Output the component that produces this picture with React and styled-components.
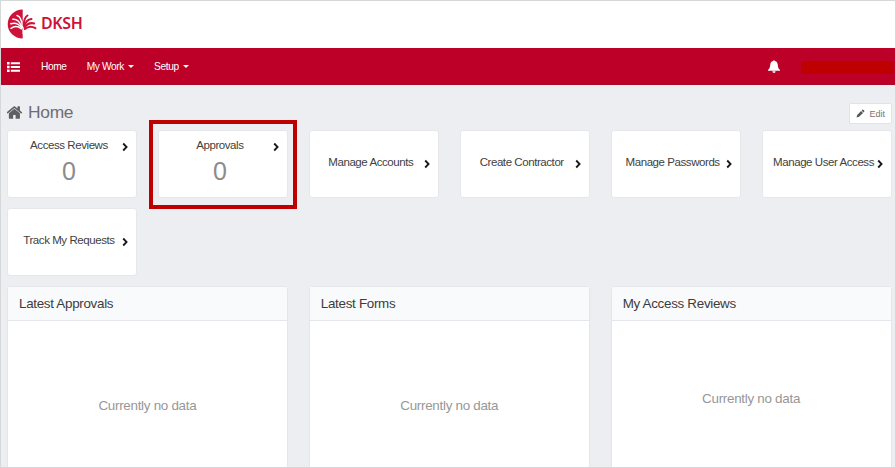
import React from 'react';
import styled, { createGlobalStyle } from 'styled-components';

const GlobalStyle = createGlobalStyle`
  * { box-sizing: border-box; }
  body { margin: 0; background: #edeef2; font-family: "Liberation Sans", Arial, sans-serif; }
`;

const Frame = styled.div`
  display: flex;
  flex-direction: column;
  width: 896px;
  height: 468px;
  overflow: hidden;
  border: 1px solid #d6d7d9;
  background: #edeef2;
`;

const Brand = styled.header`
  display: flex;
  flex: none;
  align-items: center;
  gap: 4px;
  height: 47px;
  padding: 0 0 2px 6px;
  background: #fff;
`;

const LogoMark = styled.svg`
  flex: none;
  width: 30px;
  height: 30px;
`;

const BrandName = styled.span`
  margin-top: -2px;
  font: 600 16px/20px "Noto Sans", "Open Sans", sans-serif;
  letter-spacing: -0.35px;
  color: #ce1238;
`;

const NavBar = styled.nav`
  display: flex;
  flex: none;
  align-items: center;
  height: 37px;
  padding: 0 1px 0 6px;
  background: #bd0027;
  border-bottom: 1px solid #a90a2b;
  color: #fff;
`;

const MenuIcon = styled.svg`
  width: 13px;
  height: 10px;
  margin: 2px 21px 0 0;
`;

const NavItem = styled.a`
  display: flex;
  align-items: center;
  gap: 4px;
  margin: 1px 20px 0 0;
  font-size: 10.2px;
  line-height: 14px;
  letter-spacing: -0.38px;
  white-space: nowrap;
`;

const Caret = styled.span`
  border: 3px solid transparent;
  border-top-color: #fff;
  border-bottom: 0;
`;

const Bell = styled.svg`
  width: 12px;
  height: 13px;
  margin: 0 21px 0 auto;
`;

const UserBlock = styled.div`
  width: 93px;
  height: 13px;
  margin-top: 2px;
  background: #bf0000;
`;

const Content = styled.main`
  flex: 1;
  min-height: 0;
  padding: 0 3.5px 0 6px;
`;

const TitleRow = styled.div`
  display: flex;
  align-items: flex-end;
  justify-content: space-between;
  height: 38px;
`;

const Title = styled.h1`
  display: flex;
  align-items: center;
  gap: 5px;
  margin: 0;
  font-size: 17.4px;
  font-weight: 400;
  line-height: 22px;
  letter-spacing: -0.3px;
  color: #6d6e71;
`;

const HomeIcon = styled.svg`
  width: 16px;
  height: 15px;
  fill: #5f6063;
`;

const EditButton = styled.button`
  display: flex;
  align-items: center;
  gap: 5px;
  width: 43px;
  height: 21px;
  margin-bottom: -1px;
  padding: 0 0 0 6px;
  border: 1px solid #e1e3e8;
  border-radius: 2px;
  background: #fff;
  font: 9px/12px "Liberation Sans", Arial, sans-serif;
  color: #757678;
`;

const PencilIcon = styled.svg`
  width: 9px;
  height: 9px;
`;

const CardGrid = styled.div`
  display: grid;
  grid-template-columns: repeat(6, 1fr);
  grid-auto-rows: 68px;
  gap: 10px 21px;
  margin-top: 7px;
`;

const Card = styled.div`
  position: relative;
  display: grid;
  grid-template-columns: 1fr 22px;
  align-content: ${(p) => (p.$counted ? 'start' : 'center')};
  padding: ${(p) => (p.$counted ? '6px 0 0' : '0 0 5px')};
  border: 1px solid #e5e7eb;
  border-radius: 3px;
  background: #fff;
`;

const CardLabel = styled.span`
  margin: 0 -12px 0 4px;
  font-size: 11.5px;
  line-height: 16px;
  letter-spacing: -0.43px;
  text-align: center;
  white-space: nowrap;
  color: #414141;
`;

const CardArrow = styled.svg`
  width: 6px;
  height: 10px;
  margin: 5px 0 0 8.5px;
`;

const CardCount = styled.span`
  margin: 3px -12px 0 4px;
  font-size: 25px;
  line-height: 30px;
  text-align: center;
  color: #8c8c8c;
`;

const Highlight = styled.div`
  position: absolute;
  inset: -11px -10px -12px -10px;
  border: 4px solid #bf0000;
`;

const PanelGrid = styled.div`
  display: grid;
  grid-template-columns: repeat(3, 1fr);
  gap: 21px;
  margin-top: 10px;
`;

const Panel = styled.section`
  height: 220px;
  border: 1px solid #e4e6ea;
  border-radius: 3px;
  background: #fff;
`;

const PanelTitle = styled.h2`
  height: 34px;
  margin: 0;
  padding-left: 11px;
  border-bottom: 1px solid #e3e6ea;
  background: #f9fafc;
  font-size: 13.4px;
  font-weight: 400;
  line-height: 33px;
  letter-spacing: -0.3px;
  color: #3c3c3c;
`;

const EmptyNote = styled.p`
  margin: 0;
  padding-top: ${(p) => p.$top}px;
  font-size: 13.4px;
  line-height: 16px;
  letter-spacing: -0.28px;
  text-align: center;
  color: #979797;
`;

const cards = [
  { label: 'Access Reviews', count: 0 },
  { label: 'Approvals', count: 0, highlighted: true },
  { label: 'Manage Accounts' },
  { label: 'Create Contractor' },
  { label: 'Manage Passwords' },
  { label: 'Manage User Access' },
  { label: 'Track My Requests' },
];

const panels = [
  { title: 'Latest Approvals', top: 77 },
  { title: 'Latest Forms', top: 77 },
  { title: 'My Access Reviews', top: 70 },
];

function Logo() {
  return (
    <LogoMark viewBox="0 0 30 30">
      <path d="M15.7 .4A15 14.6 0 0 0 15.7 29.6Z" fill="#ce1238" />
      <g fill="none" stroke="#fff" strokeWidth="1.5" strokeLinecap="round">
        <path d="M15.5 18Q14.5 7.5 10 6.5" />
        <path d="M15 18Q11.5 9.5 5.8 10.2" />
        <path d="M14.8 18.8Q10 12.5 3.8 14.8" />
        <path d="M14.5 19.8Q9 15.5 4 19.3" />
      </g>
      <g fill="none" stroke="#ce1238" strokeWidth="2" strokeLinecap="round">
        <path d="M16.7 16.5Q17 8.5 20.5 6.5" />
        <path d="M17.2 17.5Q19 10.5 24.5 10" />
        <path d="M17.5 18.8Q21 13 27.3 14.4" />
        <path d="M17.8 20Q23 15.8 28.4 19.2" />
      </g>
      <path d="M15.9 18V25" fill="none" stroke="#fff" strokeWidth=".8" />
    </LogoMark>
  );
}

function Arrow() {
  return (
    <CardArrow viewBox="0 0 6 10">
      <path d="M1.2 1.5 4.6 5 1.2 8.5" fill="none" stroke="#181818" strokeWidth="1.8" />
    </CardArrow>
  );
}

export default function App() {
  return (
    <>
      <GlobalStyle />
      <Frame>
        <Brand>
          <Logo />
          <BrandName>DKSH</BrandName>
        </Brand>
        <NavBar>
          <MenuIcon viewBox="0 0 13 10" fill="#fff">
            <path d="M0 0h2.6v2.4H0zM0 3.8h2.6v2.4H0zM0 7.6h2.6V10H0zM3.8 .2H13v2H3.8zM3.8 4H13v2H3.8zM3.8 7.8H13v2H3.8z" />
          </MenuIcon>
          <NavItem>Home</NavItem>
          <NavItem>My Work<Caret /></NavItem>
          <NavItem>Setup<Caret /></NavItem>
          <Bell viewBox="0 0 12 13" fill="#fff">
            <path d="M5.2 1.1a.8.8 0 0 1 1.6 0C9 1.6 9.7 3.2 9.8 5.1c.1 2.5.8 3.8 2.2 5v.7H0v-.7c1.4-1.2 2.1-2.5 2.2-5C2.3 3.2 3 1.6 5.2 1.1zM4.4 11.3h3.2a1.6 1.6 0 0 1-3.2 0z" />
          </Bell>
          <UserBlock />
        </NavBar>
        <Content>
          <TitleRow>
            <Title>
              <HomeIcon viewBox="64 128 1664 1536">
                <path d="M1408 992v480q0 26-19 45t-45 19h-384v-384h-256v384h-384q-26 0-45-19t-19-45v-480q0-1 .5-3t.5-3l575-474 575 474q1 2 1 6zm223-69l-62 74q-8 9-21 11h-3q-13 0-21-7l-692-577-692 577q-12 8-24 7-13-2-21-11l-62-74q-8-10-7-23.5t11-21.5l719-599q32-26 76-26t76 26l244 204v-195q0-14 9-23t23-9h192q14 0 23 9t9 23v408l219 182q10 8 11 21.5t-7 23.5z" />
              </HomeIcon>
              Home
            </Title>
            <EditButton>
              <PencilIcon viewBox="0 0 9 9" fill="#555659">
                <path d="M.5 8.5 1.2 5.9 5.1 2 7 3.9 3.1 7.8zM5.6 1.5 6.4.7q.4-.4.8 0L8.3 1.8q.4.4 0 .8L7.5 3.4z" />
              </PencilIcon>
              Edit
            </EditButton>
          </TitleRow>
          <CardGrid>
            {cards.map((card) => (
              <Card key={card.label} $counted={card.count !== undefined}>
                <CardLabel>{card.label}</CardLabel>
                <Arrow />
                {card.count !== undefined && <CardCount>{card.count}</CardCount>}
                {card.highlighted && <Highlight />}
              </Card>
            ))}
          </CardGrid>
          <PanelGrid>
            {panels.map((panel) => (
              <Panel key={panel.title}>
                <PanelTitle>{panel.title}</PanelTitle>
                <EmptyNote $top={panel.top}>Currently no data</EmptyNote>
              </Panel>
            ))}
          </PanelGrid>
        </Content>
      </Frame>
    </>
  );
}
